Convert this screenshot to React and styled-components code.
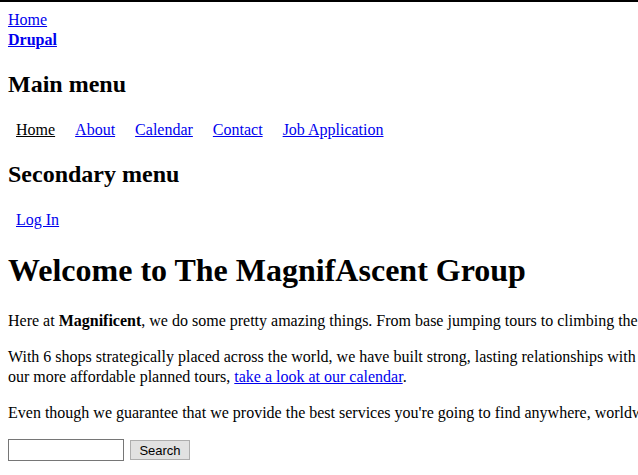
import styled, { createGlobalStyle } from 'styled-components'

const GlobalStyle = createGlobalStyle`
	html, body {
		overflow: hidden;
	}
	body {
		margin: 0;
		border-top: 2px solid #000;
		font-family: "Liberation Serif", "Times New Roman", serif;
		font-size: 16px;
		color: #000;
		background: #fff;
	}
	a {
		color: #0000ee;
	}
`

const Page = styled.div`
	width: 1100px;
	padding: 8px;
`

const Header = styled.div`
	display: flex;
	flex-direction: column;
	align-items: flex-start;
	padding-bottom: 2px;
	line-height: 20px;
`

const SiteName = styled.strong`
	font-weight: bold;
`

const MenuTitle = styled.h2`
	font-size: 24px;
	font-weight: bold;
	margin: 19px 0;
`

const Links = styled.ul`
	display: flex;
	margin: 0;
	padding: 3px 0 2px;
	list-style: none;
	line-height: 20px;
`

const LinkItem = styled.li`
	padding: 0 8px;
	& + & {
		margin-left: 4px;
	}
	a {
		color: ${p => (p.$active ? '#000' : '#0000ee')};
	}
`

const Title = styled.h1`
	font-size: 32px;
	font-weight: bold;
	margin: 20px 0 22px;
`

const Para = styled.p`
	margin: 16px 0;
	line-height: 20px;
`

const SearchForm = styled.form`
	display: flex;
	align-items: center;
	gap: 6px;
	margin-top: 16px;
`

const SearchInput = styled.input`
	box-sizing: border-box;
	width: 116px;
	height: 22px;
	padding: 1px 2px;
	border: 1px solid #767676;
	font-size: 13px;
`

const SearchButton = styled.button`
	box-sizing: border-box;
	width: 60px;
	height: 20px;
	padding: 0;
	background: #e1e1e1;
	border: 1px solid #adadad;
	font-family: "Liberation Sans", Arial, sans-serif;
	font-size: 13px;
	color: #000;
`

const mainMenu = ['Home', 'About', 'Calendar', 'Contact', 'Job Application']

export default function App() {
	return (
		<>
			<GlobalStyle />
			<Page>
				<Header>
					<a href='#'>Home</a>
					<SiteName>
						<a href='#'>Drupal</a>
					</SiteName>
				</Header>

				<MenuTitle>Main menu</MenuTitle>
				<Links>
					{mainMenu.map(item => (
						<LinkItem key={item} $active={item === 'Home'}>
							<a href='#'>{item}</a>
						</LinkItem>
					))}
				</Links>

				<MenuTitle>Secondary menu</MenuTitle>
				<Links>
					<LinkItem>
						<a href='#'>Log In</a>
					</LinkItem>
				</Links>

				<Title>Welcome to The MagnifAscent Group</Title>

				<Para>
					Here at <strong>Magnificent</strong>, we do some pretty amazing things.
					From base jumping tours to climbing the highest peaks on earth.
				</Para>
				<Para>
					With 6 shops strategically placed across the world, we have built
					strong, lasting relationships with local guides. To join one of
					<br />
					our more affordable planned tours,{' '}
					<a href='#'>take a look at our calendar</a>.
				</Para>
				<Para>
					Even though we guarantee that we provide the best services you're
					going to find anywhere, worldwide, we are always improving.
				</Para>

				<SearchForm onSubmit={e => e.preventDefault()}>
					<SearchInput type='text' />
					<SearchButton type='submit'>Search</SearchButton>
				</SearchForm>
			</Page>
		</>
	)
}
